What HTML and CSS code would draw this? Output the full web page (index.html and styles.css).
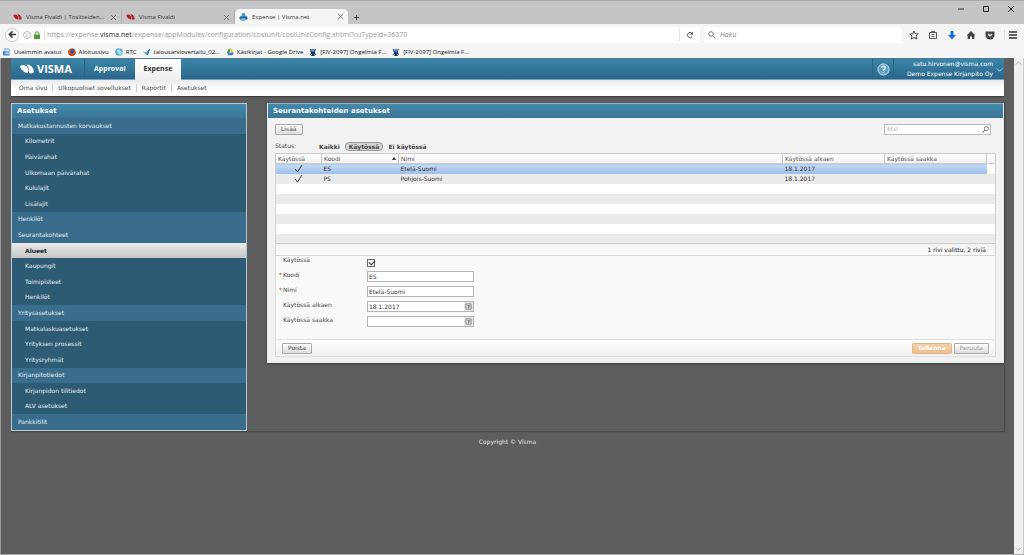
FILE: index.html
```html
<!DOCTYPE html>
<html lang="fi">
<head>
<meta charset="utf-8">
<title>Expense | Visma.net</title>
<link rel="stylesheet" href="styles.css">
</head>
<body>
<svg class="defs" aria-hidden="true">
  <symbol id="visma" viewBox="0 0 28 20"><path d="M0 4C5 0 12 2 15 7c3 5 2 9 0 11C9 18 1 11 0 4z"/><path d="M13 1c7-1 14 5 15 15-3 4-8 3-10 1 1-6-1-12-5-16z"/></symbol>
  <symbol id="jira" viewBox="0 0 12 12"><path d="M1 1l4 2h2l4-2-2 4v2l2 4-4-2H5l-4 2 2-4z" fill="#1c3e78"/><circle cx="6" cy="3.500" r="2.500" fill="#5b8fd0"/><path d="M3 12l3-5 3 5" fill="#183058"/></symbol>
  <symbol id="close" viewBox="0 0 8 8"><path d="M1 1l6 6M7 1L1 7" stroke="#666" fill="none"/></symbol>
  <symbol id="cal" viewBox="0 0 8 8"><path d="M1 1h6v6H1z" fill="#ddd" stroke="#888"/><path d="M3 3h2L4 6" stroke="#555" fill="none"/></symbol>
  <symbol id="tick" viewBox="0 0 9 9"><path d="M1 5l2.500 3L8 1" stroke="#333" fill="none"/></symbol>
</svg>
<header class="browser">
  <div class="tabs">
    <div class="tab"><svg class="fav red"><use href="#visma"/></svg><span>Visma Fivaldi | Tositteiden...</span><button class="x" aria-label="Sulje"><svg><use href="#close"/></svg></button></div>
    <div class="tab"><svg class="fav red"><use href="#visma"/></svg><span>Visma Fivaldi</span><button class="x" aria-label="Sulje"><svg><use href="#close"/></svg></button></div>
    <div class="tab current"><svg class="fav" viewBox="0 0 12 12"><circle cx="6" cy="3" r="3" fill="#4b9ace"/><rect y="5" width="12" height="5" rx="2" fill="#1f6da4"/><path d="M3 8h6v4H3z" fill="#86bddf"/></svg><span>Expense | Visma.net</span><button class="x" aria-label="Sulje"><svg><use href="#close"/></svg></button></div>
    <button class="plus" aria-label="Uusi välilehti"><svg viewBox="0 0 8 8"><path d="M4 1v6M1 4h6" stroke="#333"/></svg></button>
    <div class="win">
      <button aria-label="Pienennä"><svg viewBox="0 0 8 8"><path d="M1 4h6" stroke="#333"/></svg></button>
      <button aria-label="Suurenna"><svg viewBox="0 0 8 8"><path d="M1.500 1.500h5v5h-5z" stroke="#222" fill="none"/></svg></button>
      <button aria-label="Sulje ikkuna"><svg viewBox="0 0 8 8"><path d="M1 1l6 6M7 1L1 7" stroke="#222"/></svg></button>
    </div>
  </div>
  <div class="nav">
    <button class="back" aria-label="Takaisin"><svg viewBox="0 0 10 10"><path d="M9 5H2M5 1.500L1.500 5 5 8.500" stroke="#333" stroke-width="1.700" fill="none"/></svg></button>
    <div class="url">
      <svg class="i8" viewBox="0 0 8 8"><circle cx="4" cy="4" r="3.500" fill="none" stroke="#999" stroke-width=".7"/><path d="M4 3.500V6M4 2v.8" stroke="#999" stroke-width=".8"/></svg>
      <svg class="i8" viewBox="0 0 8 8"><path d="M1 3.500h6V8H1z" fill="#4c9a35"/><path d="M2.300 4V2.500a1.700 1.700 0 013.400 0V4" fill="none" stroke="#4c9a35"/></svg>
      <span class="address">https://expense.<b>visma.net</b>/expense/appModules/configuration/costunit/costUnitConfig.xhtml?cuTypeId=36370</span>
      <button class="reload" aria-label="Päivitä"><svg viewBox="0 0 8 8"><path d="M6.300 5.500A2.600 2.600 0 116 2.300" stroke="#555" fill="none"/><path d="M7 .8v3H4z" fill="#555"/></svg></button>
    </div>
    <label class="find"><svg class="i8" viewBox="0 0 8 8"><circle cx="3" cy="3" r="2.300" fill="none" stroke="#777"/><path d="M4.700 4.700L7.500 7.500" stroke="#777"/></svg><input type="text" placeholder="Haku" aria-label="Haku"></label>
    <div class="tools">
      <button aria-label="Kirjanmerkki"><svg viewBox="0 0 10 10"><path d="M5 1l1.200 2.700 3 .3L7 6l.7 3L5 7.500 2.300 9 3 6 .8 4l3-.3z" fill="none" stroke="#444"/></svg></button>
      <button aria-label="Kirjanmerkit"><svg viewBox="0 0 10 10"><path d="M1.500 2.500h7v6h-7zM3.500 2.500v-1h3v1M3.500 4.500h3M3.500 6.500h3" fill="none" stroke="#555"/></svg></button>
      <button aria-label="Lataukset"><svg viewBox="0 0 10 10"><path d="M3.500 1h3v4H9L5 9.500 1 5h2.500z" fill="#1c6fd8"/></svg></button>
      <button aria-label="Koti"><svg viewBox="0 0 10 10"><path d="M5 1l4.500 4.500H8.300V9H6V6.500H4V9H1.700V5.500H.5z" fill="#444"/></svg></button>
      <button aria-label="Pocket"><svg viewBox="0 0 10 10"><path d="M.5 1.500h9V5a4.500 4.500 0 01-9 0z" fill="#444"/><path d="M3 4l2 2 2-2" fill="none" stroke="#fff" stroke-width="1.200"/></svg></button>
      <button class="burger" aria-label="Valikko"><svg viewBox="0 0 10 10"><path d="M1 2h8M1 5h8M1 8h8" stroke="#333" stroke-width="1.500"/></svg></button>
    </div>
  </div>
  <nav class="bookmarks">
    <a href="#"><svg viewBox="0 0 10 10"><path d="M1 0h6l2 2v8H1z" fill="#a9c9ea"/><path d="M0 4h7v5H0z" fill="#4c87c3"/><path d="M3 3h4M3 5h4M3 7h4" stroke="#e3effb"/></svg>Useimmin avatut</a>
    <a href="#"><svg viewBox="0 0 10 10"><circle cx="5" cy="5" r="4.700" fill="#e36b17"/><circle cx="5.500" cy="4" r="2.800" fill="#2c57a5"/><path d="M0 3c2 0 3 3 6 4 2 0 3-1 4-3 0 4-2 6-5 6S0 7 0 3z" fill="#c94413"/></svg>Aloitussivu</a>
    <a href="#"><svg viewBox="0 0 10 10"><circle cx="5" cy="5" r="4.700" fill="#52afd1"/><path d="M2 4l3-3 4 5-3 3z" fill="#a9e0ee"/></svg>RTC</a>
    <a href="#"><svg viewBox="0 0 10 10"><path d="M0 4l4 2 4-5 1 1-3 7-2-1z" fill="#3284c2"/></svg>talousarviovertailu_02...</a>
    <a href="#"><svg viewBox="0 0 10 10"><path d="M3.500 1h3L3 8 1 6z" fill="#2da562"/><path d="M6.500 1L10 6H7L4 2z" fill="#f2c52c"/><path d="M3 6h7L8 9H2z" fill="#397ad0"/></svg>Käsikirjat - Google Drive</a>
    <a href="#"><svg><use href="#jira"/></svg>[FIV-2097] Ongelmia F...</a>
    <a href="#"><svg><use href="#jira"/></svg>[FIV-2097] Ongelmia F...</a>
  </nav>
</header>
<div class="view">
  <div class="page">
    <header class="top">
      <a class="logo" href="#"><svg class="mark"><use href="#visma"/></svg><span>VISMA</span></a>
      <nav class="apps"><a href="#">Approval</a><a class="on" href="#">Expense</a></nav>
      <button class="help" aria-label="Ohje"><svg viewBox="0 0 14 14"><circle cx="7" cy="7" r="6" fill="#5c9fc4" stroke="#d5e8f2"/><path d="M5 5.500c0-3 4-2.500 4-.3C9 6.700 7 6.500 7 8.500M7 9.700V11" fill="none" stroke="#fff" stroke-width="1.300"/></svg></button>
      <button class="user"><span>satu.hirvonen@visma.com<br>Demo Expense Kirjanpito Oy</span><svg viewBox="0 0 8 8"><path d="M1 3l3 3 3-3" stroke="#b9e0f3" fill="none"/></svg></button>
    </header>
    <nav class="sub"><a href="#">Oma sivu</a><a href="#">Ulkopuoliset sovellukset</a><a href="#">Raportit</a><a href="#">Asetukset</a></nav>
    <div class="content">
      <aside class="side">
        <h2>Asetukset</h2>
        <ul>
          <li class="group"><a href="#">Matkakustannusten korvaukset</a></li>
          <li><a href="#">Kilometrit</a></li>
          <li><a href="#">Päivärahat</a></li>
          <li><a href="#">Ulkomaan päivärahat</a></li>
          <li><a href="#">Kululajit</a></li>
          <li><a href="#">Lisälajit</a></li>
          <li class="group"><a href="#">Henkilöt</a></li>
          <li class="group"><a href="#">Seurantakohteet</a></li>
          <li class="active"><a href="#">Alueet</a></li>
          <li><a href="#">Kaupungit</a></li>
          <li><a href="#">Toimipisteet</a></li>
          <li><a href="#">Henkilöt</a></li>
          <li class="group"><a href="#">Yritysasetukset</a></li>
          <li><a href="#">Matkalaskuasetukset</a></li>
          <li><a href="#">Yrityksen prosessit</a></li>
          <li><a href="#">Yritysryhmät</a></li>
          <li class="group"><a href="#">Kirjanpitotiedot</a></li>
          <li><a href="#">Kirjanpidon tilitiedot</a></li>
          <li><a href="#">ALV asetukset</a></li>
          <li class="group"><a href="#">Pankkitilit</a></li>
        </ul>
      </aside>
      <main class="panel">
        <h1>Seurantakohteiden asetukset</h1>
        <div class="inner">
          <div class="actions">
            <button class="btn">Lisää</button>
            <label class="search"><input type="text" placeholder="Etsi" aria-label="Etsi"><svg viewBox="0 0 8 8"><circle cx="5" cy="3" r="2.300" fill="none" stroke="#555" stroke-width=".8"/><path d="M3.300 4.700L.5 7.500" stroke="#555"/></svg></label>
          </div>
          <div class="status"><span>Status:</span><button>Kaikki</button><button class="chosen">Käytössä</button><button>Ei käytössä</button></div>
          <table>
            <colgroup><col class="c1"><col class="c2"><col><col class="c3"><col class="c3"><col class="c4"></colgroup>
            <thead><tr><th>Käytössä</th><th><div class="sort">Koodi<svg viewBox="0 0 4 3"><path d="M0 3l2-3 2 3z" fill="#333"/></svg></div></th><th>Nimi</th><th>Käytössä alkaen</th><th>Käytössä saakka</th><th></th></tr></thead>
            <tbody>
              <tr class="sel"><td class="mid"><svg><use href="#tick"/></svg></td><td>ES</td><td>Etelä-Suomi</td><td>18.1.2017</td><td></td><td></td></tr>
              <tr><td class="mid"><svg><use href="#tick"/></svg></td><td>PS</td><td>Pohjois-Suomi</td><td>18.1.2017</td><td></td><td></td></tr>
              <tr><td colspan="6"></td></tr><tr><td colspan="6"></td></tr><tr><td colspan="6"></td></tr><tr><td colspan="6"></td></tr><tr><td colspan="6"></td></tr><tr><td colspan="6"></td></tr>
            </tbody>
          </table>
          <div class="count">1 rivi valittu, 2 riviä</div>
          <form class="form">
            <label for="use">Käytössä</label><input class="check" id="use" type="checkbox" checked>
            <label class="req" for="code">Koodi</label><div class="field"><input id="code" type="text" value="ES"></div>
            <label class="req" for="name">Nimi</label><div class="field"><input id="name" type="text" value="Etelä-Suomi"></div>
            <label for="from">Käytössä alkaen</label><div class="field"><input id="from" type="text" value="18.1.2017"><button type="button" aria-label="Valitse alkupäivä"><svg><use href="#cal"/></svg></button></div>
            <label for="to">Käytössä saakka</label><div class="field"><input id="to" type="text"><button type="button" aria-label="Valitse loppupäivä"><svg><use href="#cal"/></svg></button></div>
          </form>
          <div class="foot"><button class="btn">Poista</button><button class="btn save">Tallenna</button><button class="btn dim">Peruuta</button></div>
        </div>
      </main>
    </div>
    <footer class="copy">Copyright © Visma</footer>
  </div>
  <div class="scroll"><svg viewBox="0 0 8 8"><path d="M1 5l3-3 3 3" stroke="#aaa" fill="none"/></svg><svg viewBox="0 0 8 8"><path d="M1 3l3 3 3-3" stroke="#aaa" fill="none"/></svg></div>
</div>
</body>
</html>
```
FILE: styles.css
```css
* { box-sizing: border-box; }
html, body { height: 100%; margin: 0; }
body { display: flex; flex-direction: column; font: 6px/8px "DejaVu Sans", sans-serif; color: #444; }
button, input { font: inherit; color: inherit; margin: 0; padding: 0; border: 0; background: none; min-width: 0; }
a { color: inherit; text-decoration: none; }
svg { display: block; flex: none; }
.defs { display: none; }

/* Browser window */
.browser { font: 7px/10px "Open Sans", sans-serif; color: #333; background: #f5f5f5; }
.tabs { display: flex; height: 24px; padding-left: 9px; background: #c5c5c5; border-top: 1px solid #a9a9a9; align-items: flex-end; }
.tab { display: flex; align-items: center; gap: 4px; width: 113px; height: 14px; padding: 0 4px; border-right: 1px solid #b0b0b0; font-size: 6px; }
.tab span { flex: 1; white-space: nowrap; }
.tab.current { height: 15px; background: #f5f5f5; border: 0; border-radius: 5px 5px 0 0; }
.fav { width: 9px; height: 8px; }
.red { fill: #b5202c; height: 6px; }
.x, .x svg { width: 7px; height: 7px; }
.plus { height: 14px; padding: 0 5px; }
.plus svg { width: 7px; height: 7px; }
.win { display: flex; gap: 17px; margin-left: auto; align-self: flex-start; padding: 4px 9px; }
.win svg { width: 8px; height: 8px; }
.nav { display: flex; align-items: center; height: 21px; padding: 0 6px 0 5px; background: #f5f5f5; }
.back { width: 14px; height: 14px; border: 1px solid #ccc; border-radius: 50%; background: #fff; display: grid; place-items: center; flex: none; }
.back svg { width: 9px; height: 9px; }
.url { display: flex; flex: 1; align-items: center; gap: 2px; height: 16px; padding-left: 4px; background: #fff; }
.i8 { width: 8px; height: 8px; }
.address { flex: 1; padding-left: 2px; margin-left: 1px; color: #999; border-left: 1px solid #ddd; white-space: nowrap; }
.address b { font-weight: 400; color: #222; }
.reload { height: 14px; padding: 0 6px; border-left: 1px solid #e5e5e5; }
.reload svg { width: 8px; height: 8px; }
.find { display: flex; align-items: center; gap: 4px; width: 198px; height: 16px; padding-left: 4px; margin-left: 4px; background: #fff; }
.find input { flex: 1; font-style: italic; }
.find input::placeholder { color: #888; }
.tools { display: flex; align-items: center; gap: 9px; padding-left: 7px; }
.tools button { display: block; }
.tools svg { width: 10px; height: 10px; }
.burger { padding-left: 3px; border-left: 1px solid #ddd; }
.bookmarks { display: flex; gap: 6px; height: 13px; padding-left: 3px; font-size: 6px; align-items: center; white-space: nowrap; color: #111; }
.bookmarks a { display: flex; align-items: center; gap: 3px; }
.bookmarks svg { width: 8px; height: 8px; }

/* Application */
.view { flex: 1; display: flex; background: #5d5d5d; border-left: 1px solid #999; border-bottom: 1px solid #aaa; }
.page { flex: 1; padding: 0 10px; min-width: 0; }
.scroll { display: flex; flex-direction: column; justify-content: space-between; width: 10px; background: #f0f0f0; border-right: 1px solid #ccc; padding: 2px 1px; }
.scroll svg { width: 7px; height: 7px; }
.top { display: flex; height: 22px; color: #fff; background: linear-gradient(#3a85ab, #2b6689); border-top: 1px solid #52778c; border-bottom: 1px solid #6fa3bf; }
.logo { display: flex; align-items: center; gap: 3px; width: 74px; padding-left: 9px; border-right: 1px solid #2a6485; font: bold 11px/14px "Open Sans", sans-serif; }
.mark { width: 14px; height: 10px; fill: #fff; }
.apps { display: flex; font: bold 7px/20px "Open Sans", sans-serif; }
.apps a { padding: 0 9px; }
.apps .on { color: #333; background: linear-gradient(#fff, #eee); margin-bottom: -1px; }
.help { width: 22px; margin-left: auto; border: solid #2b6485; border-width: 0 1px; display: grid; place-items: center; }
.help svg { width: 13px; height: 13px; }
.user { display: flex; align-items: center; gap: 3px; padding: 0 1px 0 13px; text-align: right; line-height: 10px; }
.user svg { width: 7px; height: 7px; }
.sub { display: flex; align-items: center; height: 16px; padding-left: 3px; background: linear-gradient(#eaeaea, #fff 60%); margin-bottom: 7px; box-shadow: 0 1px 1px #3c3c3c; }
.sub a { padding: 0 5px; border-right: 1px solid #ccc; }
.sub a:last-child { border: 0; }
.content { display: flex; align-items: flex-start; gap: 20px; box-shadow: 1px 1px 1px #484848; }
.side { display: flex; flex-direction: column; flex: none; width: 236px; height: 328px; border: 1px solid #b4cad5; color: #e3eef3; background: #2e5b74; }
h1, h2 { margin: 0; color: #fff; font: bold 7px/14px "DejaVu Sans", sans-serif; background: linear-gradient(#4589ac, #3a7698); padding-left: 5px; }
.side ul { flex: 1; display: flex; flex-direction: column; margin: 0; padding: 0; list-style: none; }
.side li { flex: 1; display: flex; align-items: center; padding-left: 13px; }
.side .group { padding-left: 6px; background: #3a6d8c; }
.side .active { color: #222; font-weight: bold; background: linear-gradient(#ececec, #c6c6c6); }
.panel { flex: 1; min-width: 0; background: #f2f2f2; border: 1px solid #e4edf1; border-top-color: #8fb3c5; box-shadow: 0 1px 2px #3c3c3c; }
.inner { padding: 5px 7px; }
.actions { display: flex; justify-content: space-between; align-items: center; height: 12px; padding-right: 5px; }
.btn { height: 11px; padding: 0 5px; border: 1px solid #aaa; border-radius: 1px; background: linear-gradient(#fdfdfd, #ddd); line-height: 8px; }
.search { display: flex; align-items: center; width: 107px; height: 11px; padding: 0 1px 0 2px; border: 1px solid #bbb; background: #fff; }
.search input { flex: 1; }
.search input::placeholder { color: #aaa; }
.search svg { width: 7px; height: 7px; }
.status { display: flex; align-items: center; gap: 1px; height: 18px; padding-top: 4px; }
.status span { width: 39px; }
.status button { padding: 0 3px; font-weight: bold; line-height: 7px; border: 1px solid transparent; }
.status .chosen { border-color: #999; border-radius: 4px; background: #d5d5d5; }
table { width: 100%; table-layout: fixed; border-collapse: collapse; background: #fff; border: 1px solid #d0d0d0; color: #333; }
.c1 { width: 46px; }
.c2 { width: 77px; }
.c3 { width: 102px; }
.c4 { width: 9px; }
tr { height: 10px; }
th, td { padding: 0 2px; line-height: 8px; text-align: left; font-weight: 400; }
th { color: #555; background: linear-gradient(#fff, #f1f1f1); border: 1px solid #ccc; }
.sort { display: flex; align-items: center; justify-content: space-between; }
.sort svg { width: 4px; height: 3px; }
tbody tr:nth-child(even) { background: #ebebeb; }
.sel td { background: linear-gradient(#c5dbf5, #9dbde9); }
.sel td:last-child { background: #fff; }
.mid svg { width: 9px; height: 9px; margin: 0 auto; }
.count { padding: 2px 9px 1px 0; text-align: right; color: #222; border: 1px solid #d5d5d5; background: linear-gradient(#f2f2f2, #fbfbfb); border-top: 0; }
.form { display: grid; grid-template-columns: 84px 107px; grid-auto-rows: 11px; row-gap: 4px; padding: 0 7px 12px; background: #f9f9f9; border: solid #ddd; border-width: 0 1px; }
.form label { padding-left: 0; }
.req::before { content: "*"; color: #b22; margin: 0 1px 0 -4px; }
.check { position: relative; width: 8px; height: 8px; align-self: end; appearance: none; border: 1px solid #666; background: #fff; }
.check:checked::after { content: ""; position: absolute; left: 1px; top: 0; width: 5px; height: 3px; border: solid #333; border-width: 0 0 1px 1px; transform: rotate(-45deg); }
.field { display: flex; border: 1px solid #b5b5b5; background: #fff; }
.field input { flex: 1; padding-left: 1px; color: #333; }
.field button { width: 9px; background: #e3e3e3; display: grid; place-items: center; }
.field svg { width: 7px; height: 7px; }
.foot { display: flex; align-items: center; gap: 2px; height: 18px; padding: 0 6px; border: 1px solid #ddd; background: linear-gradient(#fff, #f0f0f0); }
.save { margin-left: auto; color: #fff; font-weight: bold; border-color: #dfb78e; background: linear-gradient(#f2cfa8, #ebbf91); }
.dim { color: #999; }
.copy { padding-top: 7px; text-align: center; color: #e5e5e5; }
```
